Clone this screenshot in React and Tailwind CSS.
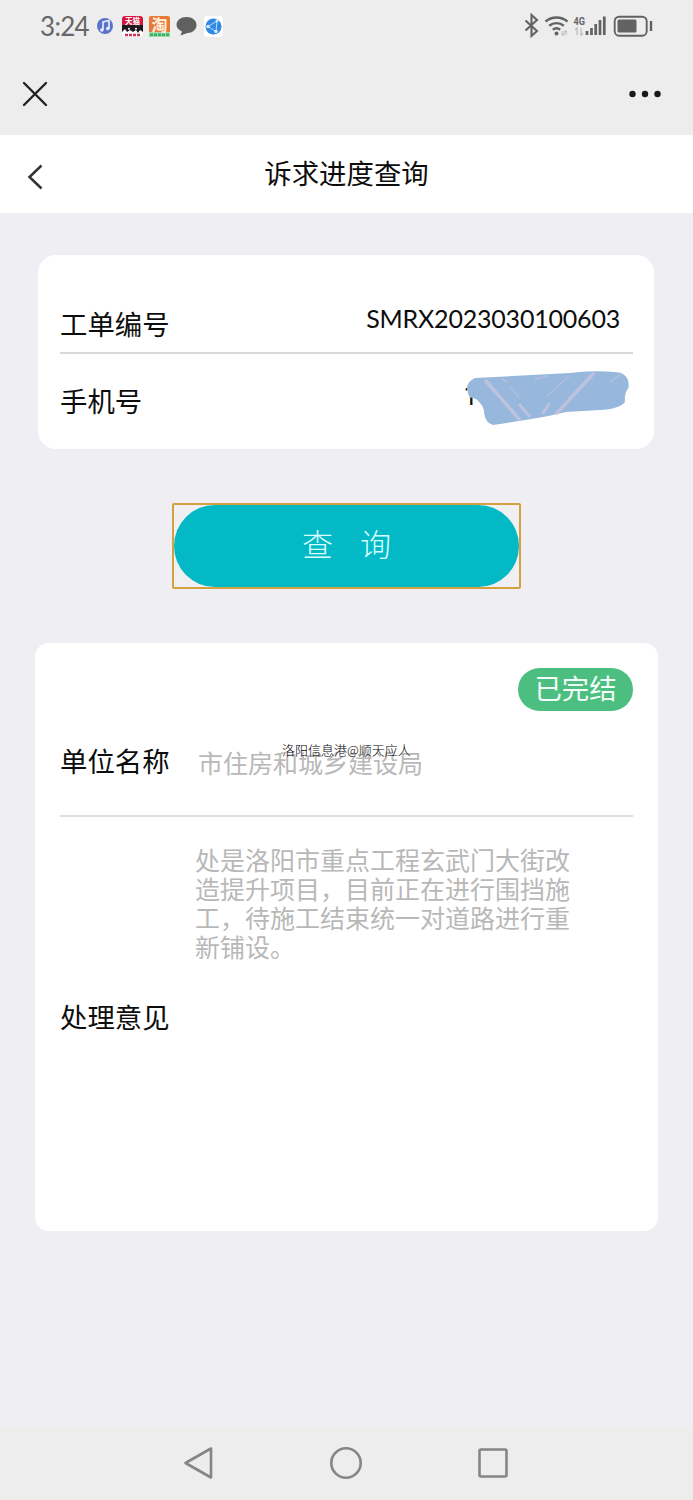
function StatusBar() {
  return (
    <div className="flex h-[51px] items-center justify-between pr-[40px] pl-[40px] text-[#666]">
      <div className="flex items-center">
        <span className="mt-[2px] w-[57px] font-[Lato,sans-serif] text-[26px] leading-[51px] tracking-[-0.7px]">3:24</span>
        <svg className="h-[26px] w-[130px] overflow-visible" viewBox="97 13 130 26">
          <circle cx="105" cy="26" r="8" fill="#5b72cb" />
          <path d="M103 30v-8l6-1.500v8" fill="none" stroke="#e4ebff" strokeWidth="1.700" />
          <circle cx="101.800" cy="30" r="1.800" fill="#e4ebff" />
          <circle cx="107.800" cy="28.600" r="1.800" fill="#e4ebff" />
          <rect x="122" y="16" width="21" height="21" rx="3" fill="#fff" />
          <path d="M122 26v-7a3 3 0 0 1 3-3h15a3 3 0 0 1 3 3v7z" fill="#d5173d" />
          <path d="M122 25h21v7l-3-2-2 3-2-3-3 2-3-2-3 2-2-3-3 3z" fill="#21161b" />
          <circle cx="129" cy="28.800" r="1" fill="#fff" />
          <circle cx="136" cy="28.800" r="1" fill="#fff" />
          <text x="125" y="23.800" fontSize="7.500" fontWeight="700" fill="#fff" fontFamily="Noto Sans CJK SC, sans-serif">天猫</text>
          <path d="M125 35h15" stroke="#cb3555" strokeWidth="2.500" strokeDasharray="3 1" />
          <rect x="149" y="16" width="21" height="21" rx="2" fill="#e87936" />
          <path d="M149 32h21v5h-21z" fill="#9bdcaa" />
          <text x="151.500" y="30.500" fontSize="16" fontWeight="700" fill="#fff0df" fontFamily="Noto Sans CJK SC, sans-serif">淘</text>
          <path d="M150 34.800h19" stroke="#39ad60" strokeWidth="2.600" strokeDasharray="3 1" />
          <path d="M186.500 17c5.800 0 10 3.500 10 8s-4.200 8-9 8l-7 2.500 1.500-4c-3.200-1.300-5.500-3.700-5.500-6.500 0-4.500 4.200-8 10-8" fill="#606060" />
          <rect x="204" y="16" width="19" height="21" rx="3" fill="#fff" />
          <circle cx="213.500" cy="26.500" r="8" fill="#3189e5" />
          <path d="M217 21l-9 5.500 8 5z" fill="none" stroke="#b9ddff" strokeWidth="1" />
          <circle cx="217" cy="21" r="1.400" fill="#d7edff" />
          <circle cx="208" cy="26.500" r="1.700" fill="#d7edff" />
          <circle cx="216" cy="31.500" r="1.700" fill="#d7edff" />
        </svg>
      </div>
      <svg className="h-[26px] w-[130px]" viewBox="523 13 130 26" fill="none" stroke="#626262">
        <path d="M525.500 20.500l11.500 10.500-5.500 5v-21l5.500 5-11.500 10.500" strokeWidth="2.100" />
        <path d="M545.500 21.500c6.500-5.300 15.500-5.300 22 0M549.200 25.700c4.300-3.500 10.300-3.500 14.600 0M552.800 29.700c2.200-1.700 5.200-1.700 7.400 0" strokeWidth="2.400" />
        <circle cx="556.500" cy="33.500" r="2" fill="#626262" stroke="none" />
        <path d="M561.500 32h5l-1.500-2M567 34h-5l1.500 2" stroke="#bbb" strokeWidth="1.200" />
        <text x="573.500" y="25" fontSize="11.500" fontWeight="700" fill="#666" stroke="none" textLength="11.500" lengthAdjust="spacingAndGlyphs" fontFamily="Roboto, sans-serif">4G</text>
        <path d="M577 35v-7l-2 2M581 28v7l2-2" stroke="#bbb" strokeWidth="1.200" />
        <path d="M587 35v-4M591.500 35v-7M595.700 35v-11M600 35v-15M604.300 35v-18.500" strokeWidth="2.700" />
        <rect x="614.700" y="16.700" width="32" height="19" rx="4.500" strokeWidth="1.900" />
        <rect x="617.500" y="19.500" width="19" height="13" rx="1.500" fill="#626262" stroke="none" />
        <path d="M651 21v10" strokeWidth="2.400" />
      </svg>
    </div>
  );
}

function Scribble() {
  return (
    <svg className="h-[60px] w-[166px]" viewBox="465 368 166 60">
      <text x="463.500" y="405" fontSize="25" fontFamily="Roboto, sans-serif" fill="#111">1</text>
      <path
        d="M475 378L570 373Q592 370 620 372.500Q630 376 628.500 388Q624 393 625 402Q619 409 600 410L566 412Q542 418 493 425Q485 423 484 412Q484 407 479 402Q477 398 470 397.500Q462 384 475 378Z"
        fill="#97b8dc"
      />
      <g fill="none" strokeLinecap="round" stroke="#c4c5df" opacity="0.85">
        <path d="M486 381L519 419M557 413L593 374" strokeWidth="3.500" />
        <path d="M520 405L529 416M549 404L543 413" strokeWidth="3" />
        <path d="M502 379l5 3M511 388l8 9M547 396L569 376M610 382l11-8M535 379l12-3" strokeWidth="1.500" opacity="0.7" />
      </g>
    </svg>
  );
}

export default function App() {
  return (
    <div className="flex h-[1500px] w-[693px] flex-col bg-[#eeeef3] font-['Noto_Sans_CJK_SC',sans-serif] text-[#0d0d0d]">
      <header className="h-[135px] shrink-0 bg-[#ededed]">
        <StatusBar />
        <div className="flex h-[86px] items-center justify-between pr-[32px] pl-[22px]">
          <svg className="size-[26px]" viewBox="0 0 26 26" fill="none" stroke="#222" strokeWidth="2.400" strokeLinecap="round">
            <path d="M2 2l22 22M24 2L2 24" />
          </svg>
          <svg className="h-[8px] w-[32px]" viewBox="0 0 32 8" fill="#181818">
            <circle cx="3.500" cy="4" r="3.200" />
            <circle cx="16" cy="4" r="3.200" />
            <circle cx="28.500" cy="4" r="3.200" />
          </svg>
        </div>
      </header>

      <div className="grid h-[78px] shrink-0 grid-cols-[100px_1fr_100px] items-center bg-white">
        <svg className="mt-[5px] ml-[27px] h-[26px] w-[17px]" viewBox="0 0 17 26" fill="none" stroke="#333" strokeWidth="2.500">
          <path d="M14.500 1.500L2.500 13l12 11.500" />
        </svg>
        <h1 className="pb-[4px] text-center text-[27.400px] leading-[74px]">诉求进度查询</h1>
      </div>

      <main className="flex flex-1 flex-col">
        <section className="mt-[42px] ml-[38px] h-[194px] w-[616px] rounded-[18px] bg-white pr-[21px] pl-[22px]">
          <div className="flex h-[99px] items-start justify-between border-b-2 border-[#d9d9d9] pt-[48px]">
            <span className="text-[27.400px] leading-[40px]">工单编号</span>
            <span className="mr-[13px] font-[Lato,sans-serif] text-[25px] leading-[30px] tracking-[-0.200px]">SMRX2023030100603</span>
          </div>
          <div className="flex justify-between">
            <span className="mt-[26px] text-[27.400px] leading-[40px]">手机号</span>
            <div className="mt-[14px] mr-[2px]">
              <Scribble />
            </div>
          </div>
        </section>

        <button className="mt-[54px] ml-[172px] h-[86px] w-[349px] rounded-[2px] border-2 border-[#d3a13e] bg-[#f0eff2]">
          <span className="flex h-full items-center justify-center gap-[27px] rounded-full bg-[#02b9c5] pb-[5px] text-[31px] font-light text-[#d8ffff]">
            <span>查</span>
            <span>询</span>
          </span>
        </button>

        <section className="mt-[54px] ml-[35px] h-[588px] w-[623px] rounded-[14px] bg-white px-[25px] pt-[25px]">
          <div className="flex justify-end">
            <span className="h-[43px] w-[115px] rounded-full bg-[#4bbe80] text-center text-[27.400px] leading-[38px] text-[#f2fff8]">已完结</span>
          </div>
          <div className="relative flex h-[106px] border-b-2 border-[#dedee0] pt-[29px]">
            <span className="w-[138px] text-[27.400px] leading-[40px]">单位名称</span>
            <span className="mt-[2px] text-[25px] leading-[40px] text-[#b8b8b8]">市住房和城乡建设局</span>
            <span className="absolute top-[29px] left-[222px] text-[13px] leading-[20px] font-light whitespace-nowrap text-black [text-shadow:-1px_-1px_0_#ffffffb0]">洛阳信息港@顺天应人</span>
          </div>
          <div className="flex pt-[28px]">
            <span className="mt-[151px] w-[135px] text-[27.400px] leading-[40px]">处理意见</span>
            <p className="w-[376px] text-[25px] leading-[29px] text-[#b8b8b8]">处是洛阳市重点工程玄武门大街改造提升项目，目前正在进行围挡施工，待施工结束统一对道路进行重新铺设。</p>
          </div>
        </section>
      </main>

      <nav className="flex h-[73px] shrink-0 items-center justify-between bg-[#ededed] pr-[184px] pb-[2px] pl-[182px]">
        <svg className="h-[34px] w-[32px]" viewBox="0 0 32 34" fill="none" stroke="#858585" strokeWidth="2.600" strokeLinejoin="round">
          <path d="M29 2.500v29L3.500 17z" />
        </svg>
        <svg className="size-[34px]" viewBox="0 0 34 34" fill="none" stroke="#858585" strokeWidth="2.600">
          <circle cx="17" cy="17" r="14.700" />
        </svg>
        <svg className="size-[32px]" viewBox="0 0 32 32" fill="none" stroke="#858585" strokeWidth="2.600">
          <rect x="2.500" y="2.500" width="27" height="27" rx="1.500" />
        </svg>
      </nav>
    </div>
  );
}
